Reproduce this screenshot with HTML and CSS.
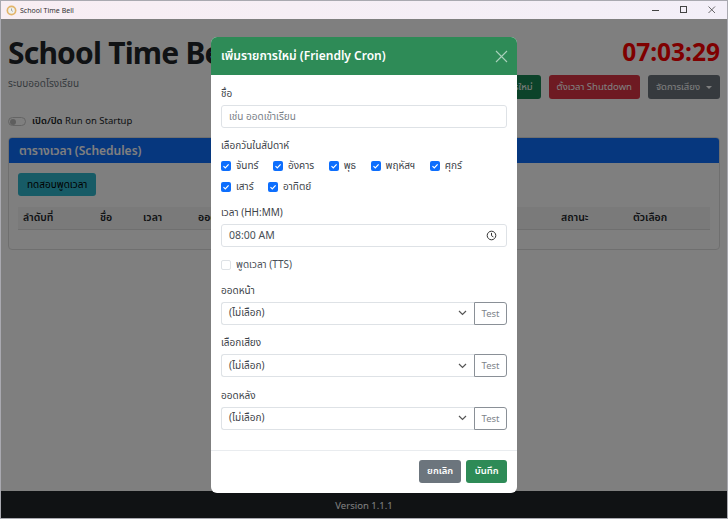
FILE: index.html
```html
<!DOCTYPE html>
<html lang="th">
<head>
  <meta charset="utf-8">
  <title>School Time Bell</title>
  <link rel="stylesheet" href="styles.css">
</head>
<body>
  <div class="titlebar">
    <div class="titlebar-name">
      <svg class="app-icon" width="11" height="11" viewBox="0 0 12 12">
        <circle cx="6" cy="6" r="5.4" fill="#e3b469"/>
        <circle cx="6" cy="6" r="3.6" fill="#eef0ee"/>
        <path d="M6 3.8V6L7.5 7" fill="none" stroke="#8a8a8a" stroke-width="0.8"/>
      </svg>
      <span>School Time Bell</span>
    </div>
    <div class="window-buttons">
      <svg width="10" height="10" viewBox="0 0 10 10"><path d="M1 5.5H8" stroke="#444" stroke-width="1"/></svg>
      <svg width="10" height="10" viewBox="0 0 10 10"><rect x="1.5" y="1.5" width="6" height="6" fill="none" stroke="#444" stroke-width="1"/></svg>
      <svg width="10" height="10" viewBox="0 0 10 10"><path d="M1.5 1.5L8 8M8 1.5L1.5 8" stroke="#444" stroke-width="0.8"/></svg>
    </div>
  </div>

  <div class="page">
    <div class="content">
      <div class="top">
        <div class="brand">
          <h1>School Time Bell</h1>
          <p class="subtitle">ระบบออดโรงเรียน</p>
        </div>
        <div class="top-right">
          <div class="clock">07:03:29</div>
          <div class="actions">
            <span class="btn btn-green">เพิ่มรายการใหม่</span>
            <span class="btn btn-red">ตั้งเวลา Shutdown</span>
            <span class="btn btn-grey">จัดการเสียง <i class="caret"></i></span>
          </div>
        </div>
      </div>

      <div class="startup">
        <span class="switch"><i></i></span>
        <span><b>เปิด/ปิด</b> Run on Startup</span>
      </div>

      <div class="card">
        <div class="card-head">ตารางเวลา (Schedules)</div>
        <div class="card-body">
          <span class="btn btn-cyan">ทดสอบพูดเวลา</span>
          <div class="table-head">
            <span class="col-no">ลำดับที่</span>
            <span class="col-name">ชื่อ</span>
            <span class="col-time">เวลา</span>
            <span class="col-before">ออดหน้า</span>
            <span class="col-status">สถานะ</span>
            <span class="col-opt">ตัวเลือก</span>
          </div>
        </div>
      </div>
    </div>
    <div class="footer">Version 1.1.1</div>

    <div class="backdrop"></div>

    <div class="modal">
      <div class="modal-head">
        <span>เพิ่มรายการใหม่ (Friendly Cron)</span>
        <svg width="13" height="13" viewBox="0 0 13 13"><path d="M1 1L12 12M12 1L1 12" stroke="#a9d0ba" stroke-width="1.1"/></svg>
      </div>
      <div class="modal-body">
        <label class="field-label">ชื่อ</label>
        <div class="input placeholder">เช่น ออดเข้าเรียน</div>

        <label class="field-label days-label">เลือกวันในสัปดาห์</label>
        <div class="days">
          <span class="day"><svg class="check" viewBox="0 0 10 10"><rect width="10" height="10" rx="2" fill="#0d6efd"/><path d="M2.5 5.2L4.3 7L7.6 3.4" fill="none" stroke="#fff" stroke-width="1.2"/></svg>จันทร์</span>
          <span class="day"><svg class="check" viewBox="0 0 10 10"><rect width="10" height="10" rx="2" fill="#0d6efd"/><path d="M2.5 5.2L4.3 7L7.6 3.4" fill="none" stroke="#fff" stroke-width="1.2"/></svg>อังคาร</span>
          <span class="day"><svg class="check" viewBox="0 0 10 10"><rect width="10" height="10" rx="2" fill="#0d6efd"/><path d="M2.5 5.2L4.3 7L7.6 3.4" fill="none" stroke="#fff" stroke-width="1.2"/></svg>พุธ</span>
          <span class="day"><svg class="check" viewBox="0 0 10 10"><rect width="10" height="10" rx="2" fill="#0d6efd"/><path d="M2.5 5.2L4.3 7L7.6 3.4" fill="none" stroke="#fff" stroke-width="1.2"/></svg>พฤหัสฯ</span>
          <span class="day"><svg class="check" viewBox="0 0 10 10"><rect width="10" height="10" rx="2" fill="#0d6efd"/><path d="M2.5 5.2L4.3 7L7.6 3.4" fill="none" stroke="#fff" stroke-width="1.2"/></svg>ศุกร์</span>
          <span class="day"><svg class="check" viewBox="0 0 10 10"><rect width="10" height="10" rx="2" fill="#0d6efd"/><path d="M2.5 5.2L4.3 7L7.6 3.4" fill="none" stroke="#fff" stroke-width="1.2"/></svg>เสาร์</span>
          <span class="day"><svg class="check" viewBox="0 0 10 10"><rect width="10" height="10" rx="2" fill="#0d6efd"/><path d="M2.5 5.2L4.3 7L7.6 3.4" fill="none" stroke="#fff" stroke-width="1.2"/></svg>อาทิตย์</span>
        </div>

        <label class="field-label time-label">เวลา (HH:MM)</label>
        <div class="input time-input">
          <span>08:00 AM</span>
          <svg width="11" height="11" viewBox="0 0 11 11"><circle cx="5.5" cy="5.5" r="4.3" fill="none" stroke="#333" stroke-width="1"/><path d="M5.5 2.9V5.7L7.4 6.9" fill="none" stroke="#333" stroke-width="1"/></svg>
        </div>

        <div class="tts"><span class="empty-check"></span>พูดเวลา (TTS)</div>

        <label class="field-label sound-label">ออดหน้า</label>
        <div class="sound-row">
          <div class="select">(ไม่เลือก)<svg width="9" height="6" viewBox="0 0 9 6"><path d="M1 1L4.5 4.5L8 1" fill="none" stroke="#555" stroke-width="1.2"/></svg></div>
          <span class="test-btn">Test</span>
        </div>

        <label class="field-label sound-label">เลือกเสียง</label>
        <div class="sound-row">
          <div class="select">(ไม่เลือก)<svg width="9" height="6" viewBox="0 0 9 6"><path d="M1 1L4.5 4.5L8 1" fill="none" stroke="#555" stroke-width="1.2"/></svg></div>
          <span class="test-btn">Test</span>
        </div>

        <label class="field-label sound-label">ออดหลัง</label>
        <div class="sound-row">
          <div class="select">(ไม่เลือก)<svg width="9" height="6" viewBox="0 0 9 6"><path d="M1 1L4.5 4.5L8 1" fill="none" stroke="#555" stroke-width="1.2"/></svg></div>
          <span class="test-btn">Test</span>
        </div>
      </div>
      <div class="modal-foot">
        <span class="btn btn-cancel">ยกเลิก</span>
        <span class="btn btn-save">บันทึก</span>
      </div>
    </div>
  </div>
</body>
</html>
```

FILE: styles.css
```css
* {
  box-sizing: border-box;
}
html, body {
  height: 100%;
}
body {
  margin: 0;
  display: flex;
  flex-direction: column;
  overflow: hidden;
  font-family: "Noto Sans", "Noto Sans Thai", "Open Sans", sans-serif;
  font-size: 10.5px;
  color: #212529;
  background-color: #fff;
  border: 1px solid #a9a9b0;
}
.titlebar {
  height: 18px;
  flex: none;
  display: flex;
  justify-content: space-between;
  align-items: center;
  padding: 0 10px 0 5px;
  background: linear-gradient(90deg, #f8eef3, #f3eff8);
  font-size: 7px;
  color: #333;
}
.titlebar-name {
  display: flex;
  align-items: center;
  gap: 3px;
}
.window-buttons {
  display: flex;
  gap: 18px;
}
.page {
  position: relative;
  flex: 1;
  display: flex;
  flex-direction: column;
  min-height: 0;
}
.content {
  flex: 1;
  padding: 16px 7px 0;
}
.top {
  display: flex;
  justify-content: space-between;
}
h1 {
  margin: 0;
  font-size: 30px;
  line-height: 36px;
  font-weight: 700;
  letter-spacing: -0.8px;
  color: #212529;
}
.subtitle {
  margin: 5px 0 0;
  font-size: 10px;
  line-height: 14px;
  color: #6c757d;
}
.top-right {
  display: flex;
  flex-direction: column;
  align-items: flex-end;
}
.clock {
  font-size: 24.5px;
  line-height: 32px;
  font-weight: 700;
  color: #ff0000;
  margin-top: 1px;
}
.actions {
  display: flex;
  gap: 8px;
  margin-top: 7px;
}
.btn {
  display: inline-flex;
  align-items: center;
  height: 23px;
  padding: 0 8px;
  border-radius: 3px;
  font-size: 9.5px;
  color: #fff;
}
.actions .btn {
  height: 24px;
}
.btn-green {
  background-color: #198754;
}
.btn-red {
  background-color: #dc3545;
}
.btn-grey {
  background-color: #6c757d;
}
.caret {
  margin-left: 6px;
  border-top: 3px solid #fff;
  border-left: 3px solid transparent;
  border-right: 3px solid transparent;
}
.btn-cyan {
  padding: 0 9px;
  font-size: 10px;
  background-color: #2fb6cc;
  color: #000;
}
.startup {
  display: flex;
  align-items: center;
  gap: 6px;
  margin-top: 15px;
  font-size: 9.5px;
  color: #212529;
}
.startup b {
  font-weight: 600;
}
.switch {
  width: 18px;
  height: 9px;
  padding: 1px;
  border: 1px solid #c8c8c8;
  border-radius: 5px;
  background-color: #fff;
}
.switch i {
  display: block;
  width: 6px;
  height: 6px;
  border-radius: 50%;
  background-color: #bdbdbd;
}
.card {
  margin-top: 9px;
  height: 113px;
  border: 1px solid #dfdfdf;
  border-radius: 4px;
  overflow: hidden;
  background-color: #fff;
}
.card-head {
  height: 25px;
  padding: 0 10px;
  line-height: 25px;
  font-size: 12px;
  font-weight: 600;
  color: #fff;
  background-color: #0d6efd;
}
.card-body {
  padding: 10px 9px;
}
.table-head {
  display: flex;
  height: 23px;
  margin-top: 11px;
  align-items: center;
  font-weight: 600;
  font-size: 10.5px;
  background-color: #f4f4f4;
  border-bottom: 1px solid #dedede;
}
.col-no {
  margin-left: 5px;
  width: 77px;
}
.col-name {
  width: 43px;
}
.col-time {
  width: 55px;
}
.col-before {
  width: 363px;
}
.col-status {
  width: 72px;
}

.backdrop {
  position: absolute;
  inset: 0;
  background-color: rgba(0, 0, 0, 0.5);
}
.footer {
  height: 27px;
  flex: none;
  padding-top: 1px;
  text-align: center;
  line-height: 27px;
  font-size: 9.5px;
  color: #fff;
  background-color: #212529;
}
.modal {
  position: absolute;
  left: 210px;
  top: 18px;
  width: 306px;
  height: 456px;
  display: flex;
  flex-direction: column;
  border-radius: 6px;
  overflow: hidden;
  background-color: #fff;
}
.modal-head {
  height: 38px;
  flex: none;
  display: flex;
  justify-content: space-between;
  align-items: center;
  padding: 0 9px 0 10px;
  font-size: 12px;
  font-weight: 600;
  color: #fff;
  background-color: #2e8b57;
}
.modal-body {
  flex: 1;
  padding: 10px 10px 0;
}
.field-label {
  display: block;
  height: 20px;
  font-size: 10px;
  line-height: 16px;
  color: #3d4349;
}
.input {
  height: 23px;
  padding: 0 7px;
  border: 1px solid #dee2e6;
  border-radius: 3px;
  line-height: 21px;
  font-size: 10px;
  color: #495057;
}
.placeholder {
  color: #7a8087;
}
.days-label {
  margin-top: 9px;
  height: 21px;
}
.days {
  display: flex;
  flex-wrap: wrap;
  gap: 5px 14.5px;
  width: 270px;
  color: #3d4349;
}
.day {
  display: inline-flex;
  align-items: center;
  gap: 5px;
  height: 16px;
  font-size: 10px;
}
.check {
  width: 10px;
  height: 10px;
}
.time-label {
  margin-top: 9px;
}
.time-input {
  display: flex;
  justify-content: space-between;
  align-items: center;
  padding-right: 9px;
  font-size: 10.5px;
}
.tts {
  display: flex;
  align-items: center;
  gap: 5px;
  height: 16px;
  margin-top: 10px;
  margin-bottom: -1px;
  font-size: 10px;
  color: #495057;
}
.empty-check {
  width: 10px;
  height: 10px;
  border: 1px solid #dee2e6;
  border-radius: 2px;
}
.sound-label {
  margin-top: 9.5px;
}
.sound-row {
  display: flex;
  height: 23px;
}
.select {
  flex: 1;
  display: flex;
  justify-content: space-between;
  align-items: center;
  padding: 0 7px 0 7px;
  border: 1px solid #dee2e6;
  border-right: none;
  border-radius: 3px 0 0 3px;
  font-size: 10px;
  color: #3d4349;
}
.test-btn {
  width: 33px;
  border: 1px solid #8a9097;
  border-radius: 0 3px 3px 0;
  text-align: center;
  line-height: 21px;
  font-size: 9.5px;
  color: #7d848a;
}
.modal-foot {
  height: 43px;
  flex: none;
  display: flex;
  justify-content: flex-end;
  align-items: center;
  gap: 5px;
  padding: 0 10px 2px;
  border-top: 1px solid #e9ecef;
}
.btn-cancel {
  background-color: #6c757d;
  font-weight: 600;
}
.btn-save {
  padding: 0 8.5px;
  background-color: #2e8b57;
  font-weight: 600;
}
```
